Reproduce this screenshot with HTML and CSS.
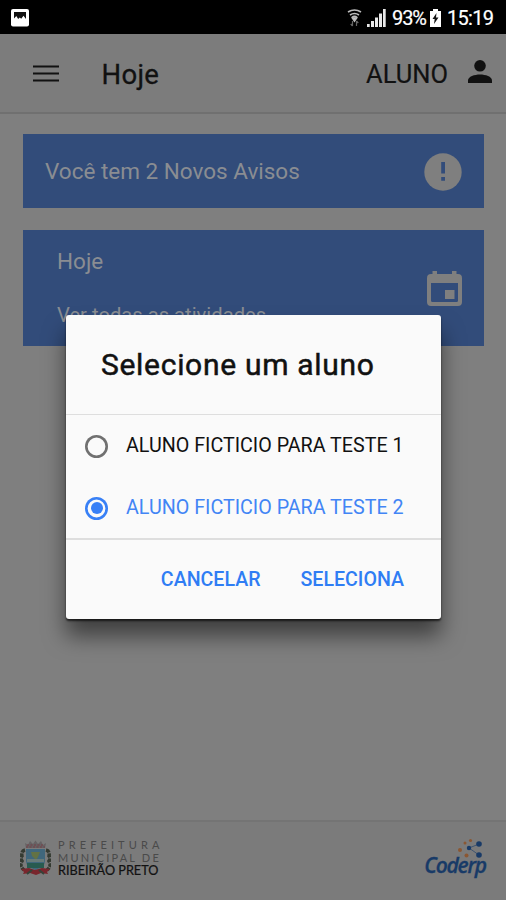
FILE: index.html
```html
<!DOCTYPE html>
<html lang="pt-BR">
<head>
<meta charset="utf-8">
<title>Hoje</title>
<link rel="stylesheet" href="styles.css">
</head>
<body>
<div class="status">
  <svg class="status-photo" width="18" height="18" viewBox="0 0 18 18"><rect width="18" height="17.5" rx="2" fill="#fff"/><path d="M3 3h12v7l-2.500-3.200-2.300 3-1.400-1.200-1.600 1.500-1.900-3L3 9.500z" fill="#111"/></svg>
  <div class="status-right">
    <svg width="15" height="18" viewBox="0 0 15 18" fill="none" stroke="#bbb" stroke-width="1.700"><path d="M1 3Q7.500-1 14 3M3 6Q7.500 3 12 6M5 8.500Q7.500 6.500 10 8.500"/><path d="M7.500 12 5.500 9h4z" fill="#fff"/><path d="M5.500 12v5M3.700 15l1.800 2M9.500 17v-5M11.300 14l-1.800-2" stroke="#666" stroke-width="1.200"/></svg>
    <svg class="signal" width="19" height="18" viewBox="0 0 19 18" fill="#e8e8e8"><path d="M0 15h2.700v3H0zM4 12h3v6H4zM8 8.500h3V18H8zM12 4.500h3V18h-3zM16 0h2.700v18H16z"/></svg>
    <span class="percent">93%</span>
    <svg class="battery" width="11" height="18" viewBox="0 0 11 18"><path d="M3 0h5v2h3v16H0V2h3z" fill="#fff"/><path d="M6.500 4 2.500 10h2.200L4 15l4.500-6.500H6z" fill="#111"/></svg>
    <span class="clock">15:19</span>
  </div>
</div>
<header class="toolbar">
  <svg width="26" height="17" viewBox="0 0 26 17" fill="none" stroke="#111" stroke-width="2.200"><path d="M0 1.500h26M0 8.500h26M0 15.500h26"/></svg>
  <h1 class="page-title">Hoje</h1>
  <span class="student">ALUNO</span>
  <svg class="person" width="24" height="23" viewBox="0 0 24 23" fill="#111"><circle cx="12" cy="5.800" r="5.800"/><path d="M0 23v-2.500C0 16.500 6.500 14.500 12 14.500s12 2 12 6V23z"/></svg>
</header>
<main class="content">
  <section class="card notice">
    <span>Você tem 2 Novos Avisos</span>
    <svg width="38" height="38" viewBox="0 0 38 38"><circle cx="19" cy="19" r="18.700" fill="#7f7f7f"/><path d="M17.200 9h3.800v11.500h-3.800zM17.200 24h3.800v3.800h-3.800z" fill="#324c7a"/></svg>
  </section>
  <section class="card today">
    <div class="today-text"><span>Hoje</span><span class="activities">Ver todas as atividades</span></div>
    <svg width="35" height="35" viewBox="0 0 35 35"><path fill="#7f7f7f" fill-rule="evenodd" d="M5.500 0H10v3h15V0h4.500v3H31q4 0 4 4v24q0 4-4 4H4q-4 0-4-4V7q0-4 4-4h1.500zM4 12v17.500q0 1.500 1.500 1.500h24q1.500 0 1.500-1.500V12zM18 19h9.500v9H18z"/></svg>
  </section>
</main>
<footer class="footer">
  <div class="city">
    <svg width="31" height="36" viewBox="0 0 31 36">
      <path d="M6 8 5 3l3 2 2-4 3 3 2.500-3.500L18 4l3-3 2 4 3-2-1 5z" fill="#666264"/><path d="M7 5h17M6 7h19" stroke="#763e46" stroke-dasharray="2 1.500"/>
      <path d="M5 10Q1 11 2 16q-2 2 0 5-3 5 2 9M26 10q4 1 3 6 2 2 0 5 3 5-2 9" fill="none" stroke="#343a31" stroke-width="3.500" stroke-dasharray="4 1"/>
      <path d="M6 9h19v12q0 6-9.500 9Q6 27 6 21z" fill="#40677c"/><path d="M11 12h9l-2 5-2 3-4-4z" fill="#637244"/><path d="M7 19h17v3H7z" fill="#687b79"/><path d="M7 23h17v5H7z" fill="#285b50"/>
      <path d="m1 29 8-1 6 2 7-2 8 1-3 3 1 2-7-1-5 2-6-2-7 1 1-2z" fill="#79262d"/><path d="m7 34 5-4M24 34l-5-4" stroke="#34443a" stroke-width="2"/>
    </svg>
    <div class="city-name"><span class="city-a">PREFEITURA</span><span class="city-b">MUNICIPAL DE</span><span class="city-c">RIBEIRÃO PRETO</span></div>
  </div>
  <div class="coderp">
    <svg width="26" height="22" viewBox="0 0 26 22"><path d="m12 10 10-4M12 10l10 7" stroke="#405570" fill="none"/><g fill="#183a67"><circle cx="12" cy="10" r="2.200"/><circle cx="22" cy="6" r="2.800"/><circle cx="22" cy="17" r="2.800"/></g><g fill="#8b5732"><circle cx="3" cy="12" r="2"/><circle cx="9.500" cy="17.500" r="2"/><circle cx="8" cy="5" r="1.500"/><circle cx="13.500" cy="2.500" r="1.600"/></g></svg>
    <span class="coderp-name">Coderp</span>
  </div>
</footer>
<div class="dialog" role="dialog">
  <h2 class="dialog-title">Selecione um aluno</h2>
  <div class="options">
    <div class="option"><span class="radio"></span><span>ALUNO FICTICIO PARA TESTE 1</span></div>
    <div class="option selected"><span class="radio"></span><span>ALUNO FICTICIO PARA TESTE 2</span></div>
  </div>
  <div class="actions"><span>CANCELAR</span><span>SELECIONA</span></div>
</div>
</body>
</html>
```
FILE: styles.css
```css
* { box-sizing: border-box; }
body { margin: 0; width: 506px; height: 900px; position: relative; overflow: hidden; display: flex; flex-direction: column; background: #7f7f7f; font-family: Roboto, "Liberation Sans", sans-serif; color: #111; white-space: nowrap; }
svg { display: block; flex: none; }
.status { height: 34px; background: #000; display: flex; align-items: center; justify-content: space-between; padding: 1px 13px 0 11px; color: #fff; }
.status-right { display: flex; align-items: center; font-size: 20px; -webkit-text-stroke: .2px #fff; }
.signal { margin-left: 5px; }
.percent { margin-left: 6px; width: 33px; letter-spacing: -1.1px; }
.battery { margin-left: 5px; }
.clock { margin-left: 6px; width: 46px; letter-spacing: -.7px; }
.toolbar { height: 80px; display: flex; align-items: center; padding: 0 14px 0 33px; background: #7c7c7c; border-bottom: 2px solid #707070; }
.page-title { margin: 2px auto 0 42.5px; font-size: 27.5px; font-weight: 400; letter-spacing: .3px; -webkit-text-stroke: .3px #111; }
.student { font-size: 25.5px; margin: 2px 20px 0 0; -webkit-text-stroke: .2px #111; }
.person { margin-top: -3px; }
.content { flex: 1; padding: 20px 22px 0 23px; display: flex; flex-direction: column; gap: 22px; }
.card { background: #324c7a; color: #8a8d92; display: flex; justify-content: space-between; padding: 0 22px; font-size: 22.5px; }
.notice { height: 74px; align-items: center; }
.notice svg { margin-top: 1px; }
.today { height: 116px; padding-left: 34px; align-items: center; }
.today-text { height: 116px; padding-top: 18px; display: flex; flex-direction: column; gap: 29px; }
.activities { font-size: 20.2px; }
.footer { height: 80px; border-top: 2px solid #747474; background: #7b7b7b; padding: 0 20px 3px 20px; display: flex; align-items: center; justify-content: space-between; }
.city { display: flex; align-items: center; gap: 7px; margin-top: -3px; }
.city-name { display: flex; flex-direction: column; font-family: Lato, sans-serif; font-size: 11px; line-height: 12.5px; color: #4a4a4a; }
.city-a { letter-spacing: 4.1px; }
.city-b { letter-spacing: 2.2px; }
.city-c { font-size: 12.7px; color: #111; -webkit-text-stroke: .2px #111; }
.coderp { display: flex; flex-direction: column; align-items: flex-end; color: #183a67; width: 60px; margin-top: -5px; }
.coderp svg { margin-right: 3px; }
.coderp-name { font: italic 600 21px/22px "Open Sans", sans-serif; letter-spacing: -1.2px; margin-top: -6px; -webkit-text-stroke: .3px #183a67; }
.dialog { position: absolute; left: 66px; top: 315px; width: 375px; height: 304px; background: #fafafa; border-radius: 3px; box-shadow: 0 2px 2px rgba(0,0,0,.65), 0 17px 22px rgba(0,0,0,.5); }
.dialog-title { margin: 0; height: 99px; padding: 32px 35px 0; font-size: 30px; letter-spacing: .7px; line-height: 36px; font-weight: 400; -webkit-text-stroke: .5px #111; color: #111; }
.options { height: 126px; border: solid #dedede; border-width: 1px 0 2px; }
.option { height: 62px; padding: 0 0 1px 19px; display: flex; align-items: center; gap: 18px; font-size: 19.7px; }
.radio { width: 23px; height: 23px; box-shadow: inset 0 0 0 2.6px #707070; border-radius: 50%; display: grid; place-items: center; margin-top: 1px; }
.selected { color: #4285f5; }
.selected .radio { box-shadow: inset 0 0 0 2.6px #3880f6; }
.selected .radio::after { content: ""; width: 12px; height: 12px; border-radius: 50%; background: #3880f6; }
.actions { display: flex; justify-content: flex-end; gap: 40px; padding: 27px 37px 0; font-size: 19.6px; line-height: 26px; font-weight: 500; color: #2f7df4; }
```
